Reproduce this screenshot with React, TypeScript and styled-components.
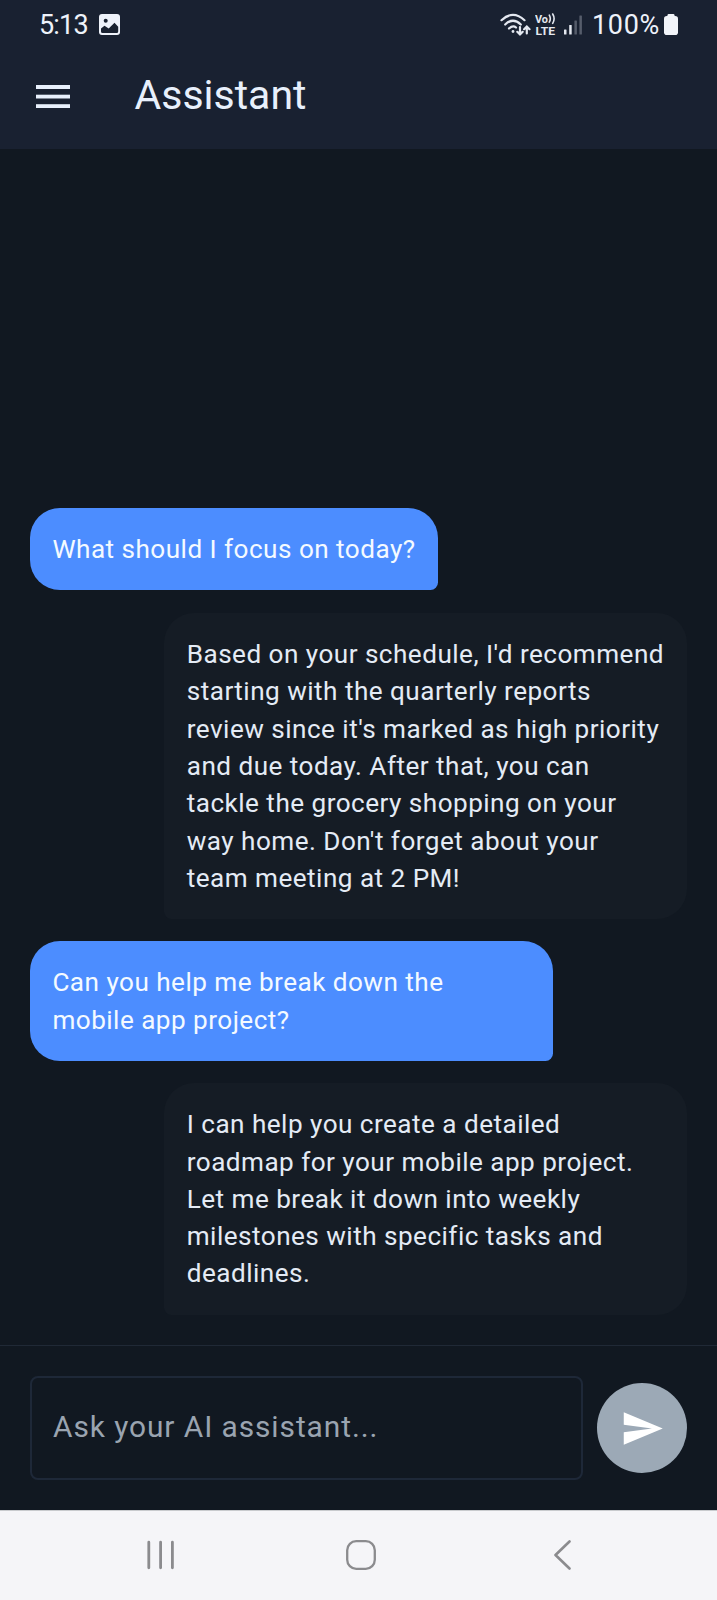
import React from "react";
import styled, { createGlobalStyle } from "styled-components";

const GlobalStyle = createGlobalStyle`
  *, *::before, *::after { box-sizing: border-box; }
  html, body, #root { margin: 0; height: 100%; }
  body { background: #111820; font-family: Roboto, "Liberation Sans", sans-serif; -webkit-font-smoothing: antialiased; }
`;

const Screen = styled.div`
  display: flex;
  flex-direction: column;
  width: 717px;
  height: 1600px;
  overflow: hidden;
  background: #111821;
`;

const Header = styled.header`
  flex: none;
  height: 148.6px;
  background: #192131;
`;

const StatusBar = styled.div`
  display: flex;
  justify-content: space-between;
  align-items: center;
  height: 44px;
  padding: 5px 39px 0 39px;
  color: #eef2fa;
`;

const StatusGroup = styled.div`
  display: flex;
  align-items: center;
`;

const StatusText = styled.span<{ $spacing: number; $gap?: number }>`
  margin-left: ${(p) => p.$gap ?? 0}px;
  font-size: 27px;
  line-height: 32px;
  letter-spacing: ${(p) => p.$spacing}px;
`;

const StatusIcon = styled.svg<{ $gap: number }>`
  display: block;
  flex: none;
  margin-left: ${(p) => p.$gap}px;
`;

const AppBar = styled.div`
  display: flex;
  align-items: center;
  height: 104px;
  padding-left: 35.6px;
`;

const MenuButton = styled.button`
  display: flex;
  padding: 1px 0 0;
  border: 0;
  background: none;
`;

const Title = styled.h1`
  margin: 0 0 0 64.9px;
  padding-bottom: 3px;
  font-size: 41px;
  font-weight: 400;
  line-height: 52px;
  color: #e8f0fc;
`;

const Messages = styled.main`
  flex: 1;
  display: flex;
  flex-direction: column;
  justify-content: flex-end;
  gap: 22.4px;
  padding: 0 30px 30.5px;
`;

const Bubble = styled.p<{ $mine?: boolean }>`
  margin: 0;
  align-self: ${(p) => (p.$mine ? "flex-start" : "flex-end")};
  max-width: 522.67px;
  padding: 23.1px 22.4px 21.7px;
  border-radius: ${(p) => (p.$mine ? "30px 30px 7.5px 30px" : "30px 30px 30px 7.5px")};
  background: ${(p) => (p.$mine ? "#4c8dff" : "#151c25")};
  color: ${(p) => (p.$mine ? "#f4faff" : "#e4ebf5")};
  font-size: 26.13px;
  line-height: 37.33px;
  letter-spacing: 0.467px;
`;

const Composer = styled.footer`
  flex: none;
  display: flex;
  align-items: center;
  gap: 14.8px;
  height: 165px;
  padding: 0 29.7px 0 30px;
  border-top: 1px solid #202936;
`;

const PromptInput = styled.input`
  flex: 1;
  min-width: 0;
  height: 104px;
  padding: 0 21px 4px;
  border: 2px solid #1e2838;
  border-radius: 8px;
  background: transparent;
  font-family: inherit;
  font-size: 29.87px;
  letter-spacing: 0.93px;
  &::placeholder { color: #9aa4b0; opacity: 1; }
`;

const SendButton = styled.button`
  flex: none;
  display: flex;
  align-items: center;
  justify-content: center;
  width: 90px;
  height: 90px;
  padding: 0;
  border: 0;
  border-radius: 50%;
  background: #9ca9b6;
`;

const NavBar = styled.nav`
  flex: none;
  display: flex;
  align-items: center;
  height: 90px;
  padding: 0 0 2px 146px;
  border-top: 1px solid #c9cbce;
  background: #f5f5f8;
`;

const NavIcon = styled.svg<{ $gap?: number }>`
  flex: none;
  margin-left: ${(p) => p.$gap ?? 0}px;
`;

const messages = [
  { mine: true, text: "What should I focus on today?" },
  {
    mine: false,
    text: "Based on your schedule, I'd recommend starting with the quarterly reports review since it's marked as high priority and due today. After that, you can tackle the grocery shopping on your way home. Don't forget about your team meeting at 2 PM!",
  },
  { mine: true, text: "Can you help me break down the mobile app project?" },
  {
    mine: false,
    text: "I can help you create a detailed roadmap for your mobile app project. Let me break it down into weekly milestones with specific tasks and deadlines.",
  },
];

const PictureIcon = () => (
  <StatusIcon $gap={11} width="21" height="21" viewBox="0 0 21 21">
    <rect width="21" height="21" rx="3" fill="#eef2fa" />
    <circle cx="6.7" cy="6.7" r="2" fill="#192130" />
    <path d="M2 14.500 5.500 11.800l4.200 2.700 5.800-5.800 3.700 4V17.500a1.500 1.500 0 0 1-1.500 1.500H3.500A1.500 1.500 0 0 1 2 17.500z" fill="#192130" />
  </StatusIcon>
);

const WifiIcon = () => (
  <StatusIcon $gap={0} width="31" height="24" viewBox="0 0 31 24" fill="none" stroke="#e4e8f0" strokeWidth="2.200" strokeLinecap="round">
    <path d="M1.500 7.200Q13-3.500 24.500 7.200" />
    <path d="M5.200 11.500Q13 4 20.800 11.500" />
    <path d="M9 15.500Q13 11.800 16 14.500" />
    <circle cx="13" cy="18.500" r="1.400" fill="#e4e8f0" stroke="none" />
    <path d="M20 14v7.500m-2.700-2.700 2.700 2.700 2.700-2.700M26.800 20.500V13.500M24.100 16.200l2.700-2.700 2.700 2.700" />
  </StatusIcon>
);

const VolteIcon = () => (
  <StatusIcon $gap={4} width="21" height="23" viewBox="0 0 21 23" fill="#e4e8f0" fontFamily="Roboto, sans-serif" fontWeight="700">
    <text x="0" y="9.500" fontSize="10.500" textLength="13" lengthAdjust="spacingAndGlyphs">Vo</text>
    <path d="M14.300 2.200q2 3.500 0 7M17.700 1q2.800 4.700 0 9.400" fill="none" stroke="#e4e8f0" strokeWidth="1.600" strokeLinecap="round" />
    <text x="0.500" y="21.500" fontSize="10.800" textLength="19.500" lengthAdjust="spacingAndGlyphs">LTE</text>
  </StatusIcon>
);

const SignalIcon = () => (
  <StatusIcon $gap={8} width="18" height="20" viewBox="0 0 18 20">
    <rect x="0" y="14.500" width="2.500" height="5" rx="0.500" fill="#e4e8f0" />
    <rect x="5.200" y="10" width="2.500" height="9.500" rx="0.500" fill="#e4e8f0" />
    <rect x="10.400" y="5.500" width="2.500" height="14" rx="0.500" fill="#565d6b" />
    <rect x="15.400" y="0.500" width="2.500" height="19" rx="0.500" fill="#565d6b" />
  </StatusIcon>
);

const BatteryIcon = () => (
  <StatusIcon $gap={4} width="14" height="21" viewBox="0 0 14 21" fill="#f2f4f9">
    <rect x="3.500" y="0" width="7" height="4" rx="1.200" />
    <rect y="2" width="14" height="19" rx="2.800" />
  </StatusIcon>
);

export default function App() {
  return (
    <Screen>
      <GlobalStyle />
      <Header>
        <StatusBar>
          <StatusGroup>
            <StatusText $spacing={-0.8}>5:13</StatusText>
            <PictureIcon />
          </StatusGroup>
          <StatusGroup>
            <WifiIcon />
            <VolteIcon />
            <SignalIcon />
            <StatusText $spacing={0.7} $gap={9.5}>100%</StatusText>
            <BatteryIcon />
          </StatusGroup>
        </StatusBar>
        <AppBar>
          <MenuButton aria-label="Menu">
            <svg width="34" height="24" viewBox="0 0 34 24" fill="#e8f0fc">
              <rect width="34" height="4" />
              <rect y="9.700" width="34" height="3.800" />
              <rect y="19.200" width="34" height="3.800" />
            </svg>
          </MenuButton>
          <Title>Assistant</Title>
        </AppBar>
      </Header>
      <Messages>
        {messages.map((m) => (
          <Bubble key={m.text} $mine={m.mine}>{m.text}</Bubble>
        ))}
      </Messages>
      <Composer>
        <PromptInput placeholder="Ask your AI assistant..." />
        <SendButton aria-label="Send">
          <svg width="45" height="45" viewBox="0 0 24 24" fill="#fff">
            <path d="M2.010 20.700 22.800 12 2.010 3.300 2 10l15 2-15 2z" />
          </svg>
        </SendButton>
      </Composer>
      <NavBar>
        <NavIcon width="30" height="30" viewBox="0 0 30 30" stroke="#8b8b8e" strokeWidth="2.800" strokeLinecap="round">
          <path d="M2.800 2.200v25.600M14.600 2.200v25.600M26.400 2.200v25.600" />
        </NavIcon>
        <NavIcon $gap={170.3} width="30" height="30" viewBox="0 0 30 30" fill="none" stroke="#8b8b8e" strokeWidth="2.300">
          <rect x="1.200" y="1.200" width="27.600" height="27.600" rx="9" />
        </NavIcon>
        <NavIcon $gap={177} width="18" height="30" viewBox="0 0 18 30" fill="none" stroke="#8b8b8e" strokeWidth="2.600" strokeLinecap="round" strokeLinejoin="round">
          <path d="M16.500 1.500 2.500 15l14 13.500" />
        </NavIcon>
      </NavBar>
    </Screen>
  );
}
